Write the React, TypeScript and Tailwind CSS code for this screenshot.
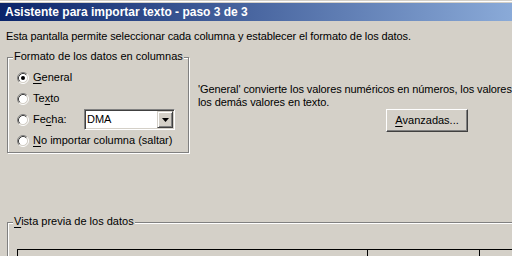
import React from "react";

interface GroupBoxProps {
  label: React.ReactNode;
  className?: string;
  children?: React.ReactNode;
}

// Classic etched group box: gray line with a white line inside and below it
function GroupBox({ label, className = "", children }: GroupBoxProps) {
  return (
    <div
      className={`relative border border-[#808080] shadow-[inset_1px_1px_0_#fff,1px_1px_0_#fff] ${className}`}
    >
      <span className="absolute left-[5px] -top-[8px] bg-[#d4d0c8] px-px whitespace-nowrap">
        {label}
      </span>
      {children}
    </div>
  );
}

function Radio({ checked = false }: { checked?: boolean }) {
  return (
    <svg width="12" height="12" viewBox="0 0 12 12" className="shrink-0">
      <circle cx="6" cy="6" r="4.5" fill="#fff" />
      <path d="M2.11 9.89A5.5 5.5 0 0 1 9.89 2.11" fill="none" stroke="#808080" />
      <path d="M9.89 2.11A5.5 5.5 0 0 1 2.11 9.89" fill="none" stroke="#fff" />
      <path d="M2.82 9.18A4.5 4.5 0 0 1 9.18 2.82" fill="none" stroke="#404040" />
      <path d="M9.18 2.82A4.5 4.5 0 0 1 2.82 9.18" fill="none" stroke="#d4d0c8" />
      {checked && <circle cx="6" cy="6" r="2" fill="#000" />}
    </svg>
  );
}

function Mn({ children }: { children: React.ReactNode }) {
  return <span className="underline underline-offset-[2px]">{children}</span>;
}

function Combo({ value }: { value: string }) {
  return (
    <div className="flex w-[91px] h-[21px] border border-t-[#808080] border-l-[#808080] border-r-white border-b-white shadow-[inset_1px_1px_0_#404040,inset_-1px_-1px_0_#d4d0c8] p-px bg-white">
      <div className="flex-1 flex items-center pl-px">{value}</div>
      <div className="w-[16px] h-full flex items-center justify-center bg-[#d4d0c8] border border-t-[#d4d0c8] border-l-[#d4d0c8] border-r-[#404040] border-b-[#404040] shadow-[inset_1px_1px_0_#fff,inset_-1px_-1px_0_#808080]">
        <svg width="7" height="4" viewBox="0 0 7 4">
          <path d="M0 0h7L3.5 4z" fill="#000" />
        </svg>
      </div>
    </div>
  );
}

export default function App() {
  return (
    <div className="w-[512px] h-[256px] overflow-hidden bg-[#d4d0c8] font-['Liberation_Sans',Arial,sans-serif] text-[11px] leading-[13px] text-black">
      {/* Window frame */}
      <div className="h-px bg-[#d4d0c8]" />
      <div className="h-px bg-white" />
      <div className="h-px bg-[#d4d0c8]" />

      {/* Title bar */}
      <div className="h-[18px] flex items-center pl-[5px] bg-[linear-gradient(to_right,#0a246a,#8aaad8)]">
        <span className="text-white font-bold text-[12px] leading-[14px] whitespace-nowrap">
          Asistente para importar texto - paso 3 de 3
        </span>
      </div>

      <div className="flex flex-col pl-[7px]">
        <p className="mt-[9px] -ml-px whitespace-nowrap tracking-[-0.1px]">
          Esta pantalla permite seleccionar cada columna y establecer el formato de los datos.
        </p>

        <div className="flex mt-[14px]">
          <GroupBox
            label="Formato de los datos en columnas"
            className="w-[182px] h-[96px] shrink-0 pt-[9px] pl-[9px]"
          >
            <div className="flex items-center h-[21px] gap-[4px]">
              <Radio checked />
              <span>
                <Mn>G</Mn>eneral
              </span>
            </div>
            <div className="flex items-center h-[21px] gap-[4px]">
              <Radio />
              <span>
                Te<Mn>x</Mn>to
              </span>
            </div>
            <div className="flex items-center h-[21px] gap-[4px]">
              <Radio />
              <span className="w-[47px]">
                Fe<Mn>c</Mn>ha:
              </span>
              <Combo value="DMA" />
            </div>
            <div className="flex items-center h-[21px] gap-[4px]">
              <Radio />
              <span className="whitespace-nowrap">
                <Mn>N</Mn>o importar columna (saltar)
              </span>
            </div>
          </GroupBox>

          <div className="flex flex-col ml-[9px] mt-[26px] tracking-[-0.1px]">
            <p className="whitespace-nowrap">
              'General' convierte los valores numéricos en números, los valores
            </p>
            <p className="whitespace-nowrap">los demás valores en texto.</p>
            <button className="ml-[188px] w-[82px] h-[23px] flex items-center justify-center bg-[#d4d0c8] border border-t-white border-l-white border-r-[#404040] border-b-[#404040] shadow-[inset_-1px_-1px_0_#808080] tracking-normal">
              <Mn>A</Mn>vanzadas...
            </button>
          </div>
        </div>

        <GroupBox
          label={
            <>
              <Mn>V</Mn>ista previa de los datos
            </>
          }
          className="mt-[69px] w-[600px] h-[80px] shrink-0 pt-[26px] pl-[9px]"
        >
          <div className="flex h-[24px] border-t border-l border-black">
            <div className="w-[350px] border-r border-black" />
            <div className="w-[112px] border-r border-black" />
            <div className="flex-1" />
          </div>
        </GroupBox>
      </div>
    </div>
  );
}
